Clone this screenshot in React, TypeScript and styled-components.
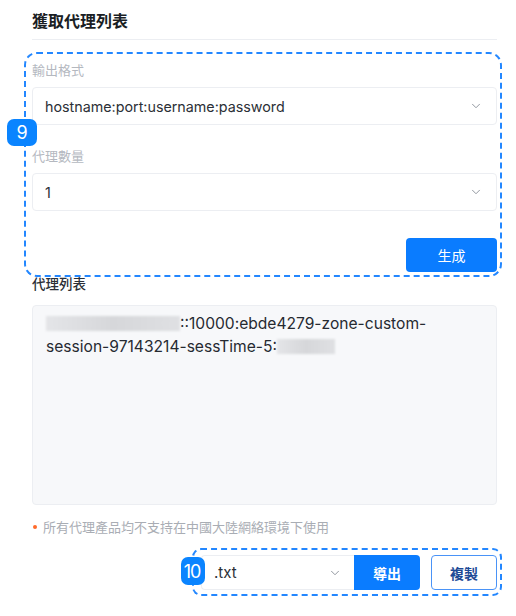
import React from "react";
import styled, { createGlobalStyle } from "styled-components";
import { ChevronDown } from "lucide-react";

const GlobalStyle = createGlobalStyle`
  body {
    margin: 0;
    background: #ffffff;
    font-family: Inter, "Noto Sans CJK TC", sans-serif;
  }
`;

const Page = styled.div`
  width: 465px;
  padding: 9px 0 0 32px;
`;

const Title = styled.h2`
  margin: 0;
  font-size: 16px;
  line-height: 22px;
  font-weight: 700;
  color: #1a1e24;
  font-family: "Noto Sans CJK TC", sans-serif;
`;

const Divider = styled.div`
  height: 1px;
  margin-top: 8px;
  background: #eceef2;
`;

const Group = styled.div`
  position: relative;
  display: flow-root;
`;

// dashed annotation frame drawn over the form group
const Highlight = styled.div`
  position: absolute;
  top: 12px;
  bottom: -5px;
  left: -8px;
  right: -5px;
  border: 2px dashed #2387ff;
  border-radius: 13px;
  pointer-events: none;
  z-index: 1;
`;

const Badge = styled.div<{ $wide?: boolean }>`
  position: absolute;
  display: flex;
  align-items: center;
  justify-content: center;
  box-sizing: border-box;
  background: #0a84ff;
  color: #ffffff;
  font-family: Inter, sans-serif;
  font-size: 18px;
  border-radius: 7px;
  width: ${(p) => (p.$wide ? 24 : 30)}px;
  height: ${(p) => (p.$wide ? 28 : 27)}px;
  letter-spacing: ${(p) => (p.$wide ? "-1px" : "0")};
  padding-right: ${(p) => (p.$wide ? 1 : 0)}px;
  z-index: 4;
`;

const Label = styled.div<{ $gap: number }>`
  margin-top: ${(p) => p.$gap}px;
  font-size: 13px;
  line-height: 20px;
  color: #b4b8bf;
  font-family: "Noto Sans CJK TC", sans-serif;
`;

const Select = styled.div`
  margin-top: 7px;
  height: 38px;
  box-sizing: border-box;
  border: 1px solid #eceef2;
  border-radius: 4px;
  display: flex;
  align-items: center;
  justify-content: space-between;
  padding: 0 13px 0 12px;
  font-size: 14.3px;
  color: #2b2f36;
  background: #ffffff;
`;

const ButtonRow = styled.div`
  display: flex;
  justify-content: flex-end;
  margin-top: 27px;
`;

const PrimaryButton = styled.button`
  width: 91px;
  height: 34px;
  border: none;
  border-radius: 4px;
  background: #0a7cff;
  color: #ffffff;
  font-size: 14px;
  font-family: "Noto Sans CJK TC", sans-serif;
`;

const SectionLabel = styled.div`
  margin-top: 1px;
  font-size: 13.5px;
  line-height: 20px;
  font-weight: 500;
  color: #2b2f36;
  font-family: "Noto Sans CJK TC", sans-serif;
`;

const ListBox = styled.div`
  margin-top: 12px;
  height: 200px;
  box-sizing: border-box;
  background: #f7f8fa;
  border: 1px solid #eceef2;
  border-radius: 4px;
  padding: 6px 13px;
  font-size: 15.6px;
  line-height: 23px;
  color: #262a31;
`;

const Blur = styled.span<{ $width: number }>`
  display: inline-block;
  width: ${(p) => p.$width}px;
  height: 15px;
  vertical-align: -2px;
  background: linear-gradient(90deg, #e4e5e8, #d6d7da 50%, #dfe0e3);
  filter: blur(0.8px);
`;

const Note = styled.div`
  margin-top: 12px;
  display: flex;
  align-items: center;
  gap: 6px;
  font-size: 13px;
  line-height: 20px;
  color: #a9adb4;
  font-family: "Noto Sans CJK TC", sans-serif;
`;

const Dot = styled.span`
  width: 4px;
  height: 4px;
  border-radius: 50%;
  background: #ff6a2b;
  margin-left: 1px;
`;

const ExportRow = styled.div`
  margin-top: 11px;
  margin-right: -5px;
  display: flex;
  justify-content: flex-end;
`;

const ExportFrame = styled.div`
  position: relative;
  display: flex;
  gap: 11px;
  padding: 5px 3px 4px 7.5px;
  border: 2px dashed #2387ff;
  border-radius: 9px;
`;

const ExportGroup = styled.div`
  display: flex;
`;

const FileSelect = styled.div`
  width: 153px;
  height: 35px;
  box-sizing: border-box;
  border: 1px solid #eceef2;
  border-right: none;
  border-radius: 4px 0 0 4px;
  display: flex;
  align-items: center;
  justify-content: space-between;
  padding: 0 12px 0 12px;
  font-size: 15px;
  color: #2b2f36;
  background: #ffffff;
`;

const JoinedButton = styled.button`
  width: 66px;
  height: 35px;
  border: none;
  border-radius: 0 4px 4px 0;
  background: #0a7cff;
  color: #ffffff;
  font-size: 14px;
  font-weight: 700;
  font-family: "Noto Sans CJK TC", sans-serif;
`;

const OutlineButton = styled.button`
  width: 66px;
  height: 35px;
  box-sizing: border-box;
  border: 1px solid #4a93f7;
  border-radius: 4px;
  background: #ffffff;
  color: #1d4a96;
  font-size: 14px;
  font-weight: 700;
  font-family: "Noto Sans CJK TC", sans-serif;
`;

const Chevron = () => <ChevronDown size={14} strokeWidth={1.6} color="#8b9099" />;

export default function App() {
  return (
    <>
      <GlobalStyle />
      <Page>
        <Title>獲取代理列表</Title>
        <Divider />
        <Group>
          <Highlight />
          <Badge style={{ left: -25, top: 79 }}>9</Badge>
          <Label $gap={20}>輸出格式</Label>
          <Select>
            <span>hostname:port:username:password</span>
            <Chevron />
          </Select>
          <Label $gap={21}>代理數量</Label>
          <Select>
            <span>1</span>
            <Chevron />
          </Select>
          <ButtonRow>
            <PrimaryButton>生成</PrimaryButton>
          </ButtonRow>
        </Group>
        <SectionLabel>代理列表</SectionLabel>
        <ListBox>
          <Blur $width={134} />::10000:ebde4279-zone-custom-
          <br />
          session-97143214-sessTime-5:<Blur $width={58} />
        </ListBox>
        <Note>
          <Dot />
          所有代理產品均不支持在中國大陸網絡環境下使用
        </Note>
        <ExportRow>
          <ExportFrame>
            <Badge $wide style={{ left: -13, top: 7 }}>10</Badge>
            <ExportGroup>
              <FileSelect>
                <span>.txt</span>
                <Chevron />
              </FileSelect>
              <JoinedButton>導出</JoinedButton>
            </ExportGroup>
            <OutlineButton>複製</OutlineButton>
          </ExportFrame>
        </ExportRow>
      </Page>
    </>
  );
}
